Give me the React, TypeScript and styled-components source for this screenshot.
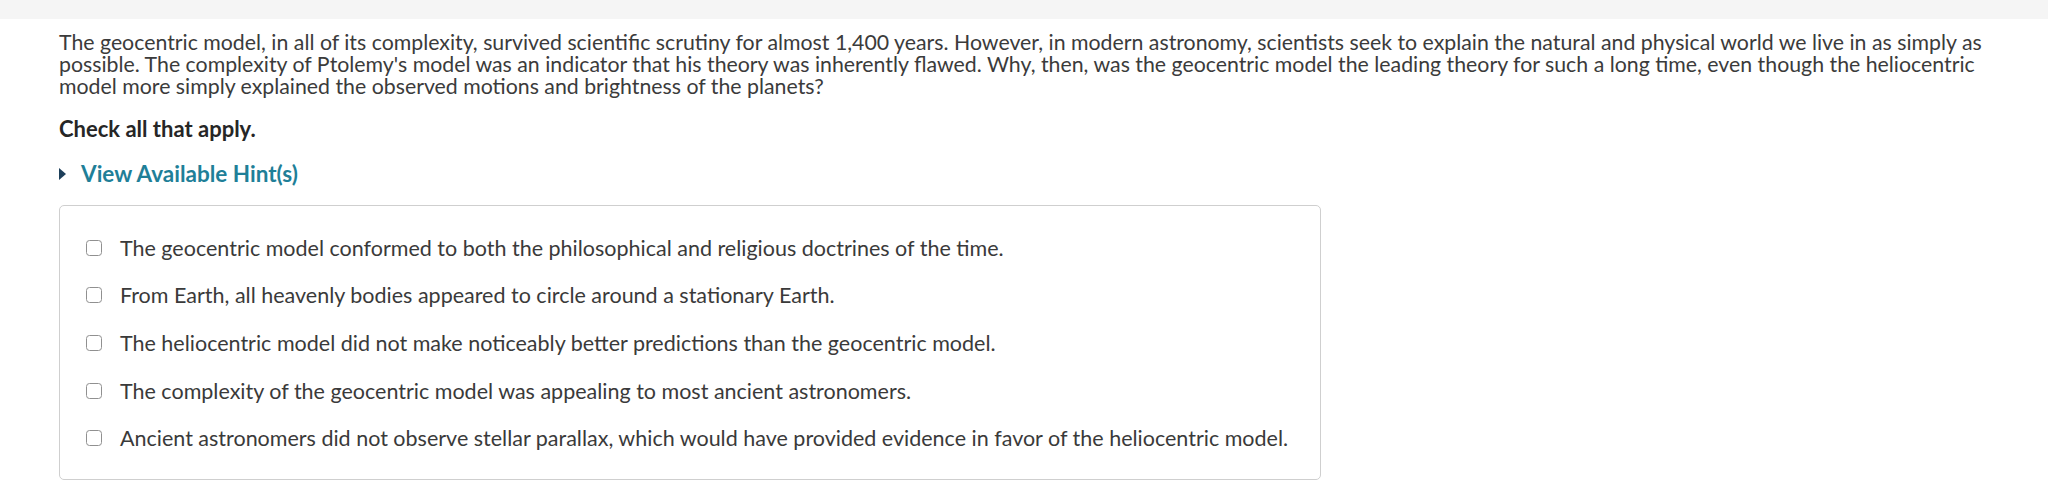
import React from 'react';
import styled, { createGlobalStyle } from 'styled-components';

const GlobalStyle = createGlobalStyle`
  html, body {
    margin: 0;
    padding: 0;
    background: #ffffff;
  }
  body {
    font-family: 'Lato', 'Liberation Sans', sans-serif;
    color: #3a3a3a;
  }
`;

const TopBar = styled.div`
  height: 19px;
  background: #f5f5f5;
`;

const Content = styled.div`
  padding: 12px 38px 0 59px;
`;

const Prompt = styled.p`
  margin: 0;
  font-size: 21.3px;
  line-height: 22px;
  color: #3b3b3b;
`;

const Instruction = styled.div`
  margin-top: 21px;
  font-size: 22px;
  line-height: 22px;
  font-weight: 700;
  color: #262626;
`;

const HintToggle = styled.div`
  margin-top: 23px;
  display: flex;
  align-items: center;
  gap: 15px;
  font-size: 22.5px;
  line-height: 22px;
  font-weight: 700;
  color: #1f7f98;
`;

const Caret = styled.span`
  width: 0;
  height: 0;
  border-top: 6px solid transparent;
  border-bottom: 6px solid transparent;
  border-left: 7px solid #1d3f5a;
`;

const ChoiceBox = styled.div`
  margin-top: 20px;
  width: 1262px;
  box-sizing: border-box;
  border: 1px solid #cfcfcf;
  border-radius: 5px;
  padding: 18px 0 17px 26px;
  display: flex;
  flex-direction: column;
`;

const Choice = styled.label`
  display: flex;
  align-items: center;
  gap: 18px;
  height: 47.6px;
  font-size: 21.5px;
  color: #3a3a3a;
`;

const Box = styled.span`
  width: 16px;
  height: 16px;
  box-sizing: border-box;
  border: 1.5px solid #909090;
  border-radius: 3.5px;
  flex: none;
`;

const choices = [
  'The geocentric model conformed to both the philosophical and religious doctrines of the time.',
  'From Earth, all heavenly bodies appeared to circle around a stationary Earth.',
  'The heliocentric model did not make noticeably better predictions than the geocentric model.',
  'The complexity of the geocentric model was appealing to most ancient astronomers.',
  'Ancient astronomers did not observe stellar parallax, which would have provided evidence in favor of the heliocentric model.',
];

export default function App() {
  return (
    <>
      <GlobalStyle />
      <TopBar />
      <Content>
        <Prompt>
          The geocentric model, in all of its complexity, survived scientific scrutiny for almost 1,400 years. However, in
          modern astronomy, scientists seek to explain the natural and physical world we live in as simply as possible. The
          complexity of Ptolemy's model was an indicator that his theory was inherently flawed. Why, then, was the geocentric
          model the leading theory for such a long time, even though the heliocentric model more simply explained the
          observed motions and brightness of the planets?
        </Prompt>
        <Instruction>Check all that apply.</Instruction>
        <HintToggle>
          <Caret />
          View Available Hint(s)
        </HintToggle>
        <ChoiceBox>
          {choices.map((c) => (
            <Choice key={c}>
              <Box />
              {c}
            </Choice>
          ))}
        </ChoiceBox>
      </Content>
    </>
  );
}
